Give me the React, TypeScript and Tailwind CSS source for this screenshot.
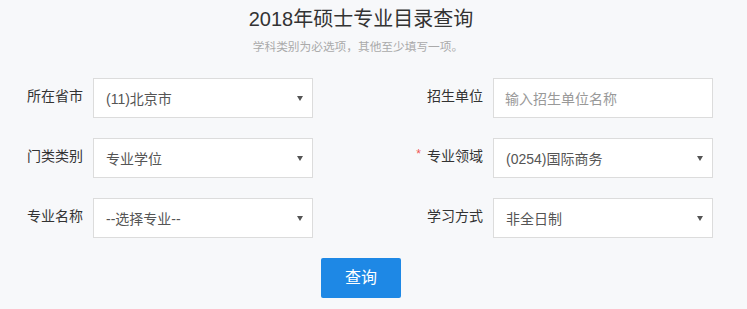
import React from "react";

const font = { fontFamily: '"Liberation Sans", "Noto Sans CJK SC", sans-serif' };

function Arrow() {
  return (
    <svg width="6" height="5" viewBox="0 0 6 5" className="shrink-0">
      <path d="M0 0 L6 0 L3 5 Z" fill="#555" />
    </svg>
  );
}

function SelectBox({ value }: { value: string }) {
  return (
    <div className="w-[220px] h-[40px] bg-white border border-[#dcdcdc] flex items-center pl-[12px] pr-[9px] box-border">
      <span className="flex-1 text-[14px] text-[#555] pt-[3px]">{value}</span>
      <Arrow />
    </div>
  );
}

function InputBox({ placeholder }: { placeholder: string }) {
  return (
    <div className="w-[220px] h-[40px] bg-white border border-[#dcdcdc] flex items-center pl-[11px] box-border">
      <span className="text-[14px] text-[#999] pt-[3px]">{placeholder}</span>
    </div>
  );
}

function Label({ text, required }: { text: string; required?: boolean }) {
  return (
    <div className="w-[83px] h-[40px] flex items-center justify-end text-[14px] text-[#333] pb-[3px]">
      {required && <span className="text-[#e55] text-[12px] mr-[6px] -mt-[6px]">*</span>}
      {text}
    </div>
  );
}

export default function App() {
  return (
    <div className="w-[747px] h-[309px] bg-[#f7f8fa] overflow-hidden" style={font}>
      <div className="w-[722px] flex flex-col">
        <div className="text-center text-[20px] leading-[28px] text-[#333] mt-[5px]">2018年硕士专业目录查询</div>
        <div className="text-center text-[11.7px] leading-[16px] text-[#aaa] mt-[6px] pr-[6px]">学科类别为必选项，其他至少填写一项。</div>
        <div className="mt-[23px] flex flex-col gap-[20px]">
          <div className="flex h-[40px]">
            <Label text="所在省市" />
            <div className="ml-[10px]"><SelectBox value="(11)北京市" /></div>
            <div className="ml-[87px]"><Label text="招生单位" /></div>
            <div className="ml-[10px]"><InputBox placeholder="输入招生单位名称" /></div>
          </div>
          <div className="flex h-[40px]">
            <Label text="门类类别" />
            <div className="ml-[10px]"><SelectBox value="专业学位" /></div>
            <div className="ml-[87px]"><Label text="专业领域" required /></div>
            <div className="ml-[10px]"><SelectBox value="(0254)国际商务" /></div>
          </div>
          <div className="flex h-[40px]">
            <Label text="专业名称" />
            <div className="ml-[10px]"><SelectBox value="--选择专业--" /></div>
            <div className="ml-[87px]"><Label text="学习方式" /></div>
            <div className="ml-[10px]"><SelectBox value="非全日制" /></div>
          </div>
          <div className="flex justify-center">
            <button className="w-[80px] h-[40px] bg-[#1e88e5] text-white text-[16px] rounded-[2px]">查询</button>
          </div>
        </div>
      </div>
    </div>
  );
}
